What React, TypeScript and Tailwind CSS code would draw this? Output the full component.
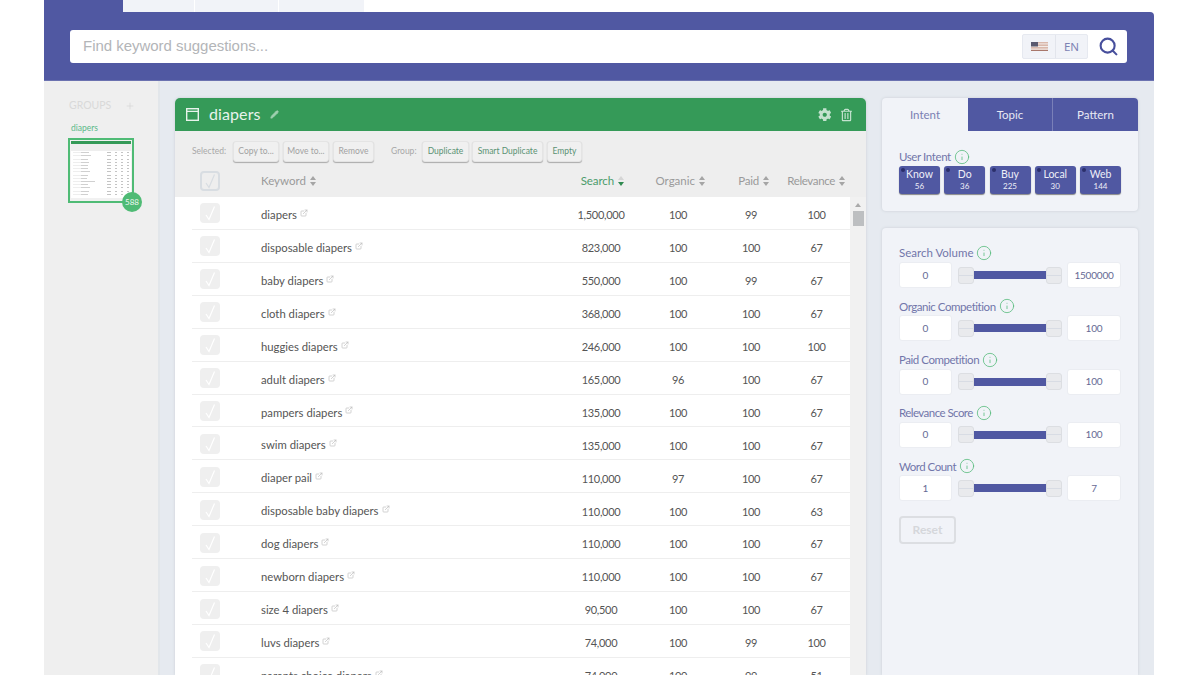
import { Search, Pencil, Plus, ExternalLink, Info } from "lucide-react";
import { FaCog, FaRegTrashAlt } from "react-icons/fa";

const font = "font-['Lato','Noto_Sans',sans-serif]";

const rows: [string, string, string, string, string][] = [
  ["diapers", "1,500,000", "100", "99", "100"],
  ["disposable diapers", "823,000", "100", "100", "67"],
  ["baby diapers", "550,000", "100", "99", "67"],
  ["cloth diapers", "368,000", "100", "100", "67"],
  ["huggies diapers", "246,000", "100", "100", "100"],
  ["adult diapers", "165,000", "96", "100", "67"],
  ["pampers diapers", "135,000", "100", "100", "67"],
  ["swim diapers", "135,000", "100", "100", "67"],
  ["diaper pail", "110,000", "97", "100", "67"],
  ["disposable baby diapers", "110,000", "100", "100", "63"],
  ["dog diapers", "110,000", "100", "100", "67"],
  ["newborn diapers", "110,000", "100", "100", "67"],
  ["size 4 diapers", "90,500", "100", "100", "67"],
  ["luvs diapers", "74,000", "100", "99", "100"],
  ["parents choice diapers", "74,000", "100", "99", "51"],
];

const filters = [
  ["Search Volume", "0", "1500000", "tracking-[0px]"],
  ["Organic Competition", "0", "100", "tracking-[-0.45px]"],
  ["Paid Competition", "0", "100", "tracking-[-0.45px]"],
  ["Relevance Score", "0", "100", "tracking-[-0.55px]"],
  ["Word Count", "1", "7", "tracking-[-0.5px]"],
];

const intents = [
  ["Know", "56"],
  ["Do", "36"],
  ["Buy", "225"],
  ["Local", "30"],
  ["Web", "144"],
];

function Sort({ active }: { active?: boolean }) {
  return (
    <span className="inline-flex flex-col gap-[2px] ml-[4px]">
      <span className={`w-0 h-0 border-x-[3px] border-x-transparent border-b-[4px] ${active ? "border-b-[#d5d5d5]" : "border-b-[#a5a5a5]"}`} />
      <span className={`w-0 h-0 border-x-[3px] border-x-transparent border-t-[4px] ${active ? "border-t-[#2f8a50]" : "border-t-[#a5a5a5]"}`} />
    </span>
  );
}

function Tick({ color }: { color: string }) {
  return (
    <svg width="14" height="16" viewBox="0 0 14 16" fill="none" stroke={color} strokeWidth="1.2">
      <path d="M3 10L6 14.5L11.5 1.5" />
    </svg>
  );
}

function InfoDot() {
  return <Info className="ml-[3px] w-[16px] h-[16px] text-[#57bb7c]" strokeWidth={1.2} />;
}

function Btn({ children, green, w }: { children: string; green?: boolean; w: string }) {
  return (
    <span className={`${w} h-[21px] flex items-center justify-center whitespace-nowrap text-[8.5px] rounded-[3px] border border-[#e4e4e4] bg-[#f0f0f0] shadow-[0_1px_1px_#aaa] ${green ? "text-[#5b9274]" : "text-[#a2a2a2]"}`}>
      {children}
    </span>
  );
}

function Thumb() {
  return (
    <div className="relative mt-[4px] ml-[24px] w-[66px] h-[65px] border-2 border-[#4fbb75] bg-[#f1f1f1] p-[1px]">
      <div className="h-[3px] bg-[#359a58]" />
      <div className="h-[7px] bg-[#eee]" />
      <div className="h-[47px] bg-white px-[2px] pt-[1px] flex flex-col gap-[1.7px]">
        {[8, 10, 7, 8, 7, 7, 9, 7, 6, 14, 7, 9, 8, 7].map((w, i) => (
          <div key={i} className="flex items-center h-[1.5px]">
            <div className="w-[8px] h-px bg-[#eee]" />
            <div className="h-px bg-[#d0d0d0]" style={{ width: w }} />
            <div className="ml-auto flex gap-[4px]">
              <div className="w-[4px] h-px bg-[#c4c4c4]" />
              <div className="w-[2px] h-px bg-[#c4c4c4]" />
              <div className="w-[2px] h-px bg-[#c4c4c4]" />
              <div className="w-[2px] h-px bg-[#c4c4c4]" />
            </div>
          </div>
        ))}
      </div>
      <div className="absolute left-[52px] top-[52px] w-[20px] h-[20px] rounded-full bg-[#4fbb75] text-[#eef7f1] text-[8px] flex items-center justify-center">
        588
      </div>
    </div>
  );
}

export default function App() {
  return (
    <div className={`${font} w-[1200px] h-[675px] overflow-hidden bg-white`}>
      <div className="mx-[44px] w-[1110px] h-full flex flex-col">
        {/* top tabs */}
        <div className="h-[12px] flex shrink-0">
          <div className="w-[79px] bg-[#5058a2]" />
          <div className="w-[72px] bg-[#f1f3f8] border-r border-white" />
          <div className="w-[84px] bg-[#f1f3f8] border-r border-white" />
          <div className="w-[85px] bg-[#f1f3f8]" />
        </div>
        {/* search header */}
        <div className="h-[69px] shrink-0 bg-[#5058a2] rounded-tr-[4px] pl-[26px] pr-[27px] pt-[18px] border-b border-[#6b72b0]">
          <div className="h-[33px] bg-white rounded-[3px] flex items-center pl-[13px] pr-[8px]">
            <span className="text-[15px] tracking-[-0.03px] text-[#b3b5b8] font-['Liberation_Sans',sans-serif]">Find keyword suggestions...</span>
            <div className="ml-auto h-[25px] flex items-stretch rounded-[2px] border border-[#e6e9f0] bg-[#f1f3f8]">
              <div className="w-[33px] flex items-center justify-center border-r border-[#e2e5ec]">
                <svg width="17" height="9" viewBox="0 0 17 9">
                  <rect width="17" height="9" fill="#d9b8ab" />
                  <rect y="1.4" width="17" height="1" fill="#f3ece8" />
                  <rect y="4" width="17" height="1" fill="#f3ece8" />
                  <rect y="6.6" width="17" height="1" fill="#f3ece8" />
                  <rect y="8" width="17" height="1" fill="#a8776b" />
                  <rect width="7" height="4.5" fill="#5a5a70" />
                </svg>
              </div>
              <div className="w-[31px] flex items-center justify-center text-[11.5px] text-[#7d82b4] font-['Noto_Sans',sans-serif]">EN</div>
            </div>
            <Search className="ml-[10px] w-[21px] h-[21px] text-[#474f9c]" strokeWidth={2.4} />
          </div>
        </div>
        {/* body */}
        <div className="flex-1 flex min-h-0 bg-[#e6eaf0]">
          {/* sidebar */}
          <div className="w-[116px] shrink-0 bg-[#efefef] border-r-2 border-[#e2e6ea] pt-[18px]">
            <div className="flex items-center pl-[25px] text-[10.5px] text-[#d9d9d9] h-[14px]">
              <span>GROUPS</span>
              <Plus className="ml-[14px] w-[10px] h-[10px]" strokeWidth={2} />
            </div>
            <div className="ml-[27px] mt-[9px] text-[8.5px] leading-[12px] text-[#5bb98a]">diapers</div>
            <Thumb />
          </div>
          {/* main card */}
          <div className="ml-[15px] mt-[17px] w-[691px] shrink-0 rounded-t-[5px] overflow-hidden bg-[#eeeeee] shadow-[0_0_3px_#c8cdd4] flex flex-col">
            <div className="h-[33px] shrink-0 bg-[#359a58] flex items-center pl-[11px] pr-[14px] text-[#e8f3ec]">
              <svg width="13" height="13" viewBox="0 0 13 13" fill="none" stroke="#e8f3ec" strokeWidth="1.4">
                <rect x="0.7" y="0.7" width="11.6" height="11.6" />
                <path d="M0.7 3.4H12.3" />
              </svg>
              <span className="ml-[10px] -mt-[2px] text-[16px] tracking-[0.1px]">diapers</span>
              <Pencil className="ml-[9px] w-[9px] h-[9px] text-[#9fd0b0] fill-[#9fd0b0]" />
              <FaCog className="ml-auto w-[13.5px] h-[13.5px] text-[#c4e2cf]" />
              <FaRegTrashAlt className="ml-[10px] w-[11px] h-[14px] text-[#c4e2cf]" />
            </div>
            <div className="h-[40px] shrink-0 flex items-center pl-[17px] text-[8.5px] text-[#a8a8a8]">
              <span className="w-[41px]">Selected:</span>
              <Btn w="w-[46px]">Copy to...</Btn>
              <span className="w-[4px]" />
              <Btn w="w-[46px]">Move to...</Btn>
              <span className="w-[4px]" />
              <Btn w="w-[41px]">Remove</Btn>
              <span className="ml-[17px] w-[31px]">Group:</span>
              <Btn green w="w-[47px]">Duplicate</Btn>
              <span className="w-[3px]" />
              <Btn green w="w-[71px]">Smart Duplicate</Btn>
              <span className="w-[4px]" />
              <Btn green w="w-[35px]">Empty</Btn>
            </div>
            <div className="h-[26px] shrink-0 flex items-start pl-[25px] text-[11.5px] text-[#9a9a9a]">
              <div className="w-[20px] h-[20px] rounded-[4px] border-2 border-[#d8dde2] flex items-center justify-center">
                <Tick color="#d8dde2" />
              </div>
              <div className="h-[20px] ml-[41px] w-[285px] flex items-center">Keyword<Sort /></div>
              <div className="h-[20px] w-[78px] flex items-center justify-end text-[#4c9c6c] tracking-[-0.1px]">Search<Sort active /></div>
              <div className="h-[20px] w-[81px] flex items-center justify-end">Organic<Sort /></div>
              <div className="h-[20px] w-[64px] flex items-center justify-end tracking-[-0.2px]">Paid<Sort /></div>
              <div className="h-[20px] w-[76px] flex items-center justify-end tracking-[-0.35px]">Relevance<Sort /></div>
            </div>
            <div className="flex-1 min-h-0 flex bg-white">
              <div className="w-[17px] shrink-0 bg-white" />
              <div className="w-[658px] shrink-0">
                {rows.map((r) => (
                  <div key={r[0]} className="h-[32.93px] flex items-center border-b border-[#eeeeee] text-[11.3px] text-[#555]">
                    <div className="ml-[8px] w-[20px] h-[20px] rounded-[4px] bg-[#efefef] flex items-center justify-center mt-px">
                      <Tick color="#ffffff" />
                    </div>
                    <div className="ml-[41px] w-[270px] flex items-center mt-[5px]">
                      {r[0]}
                      <ExternalLink className="ml-[3px] -mt-[5px] w-[8px] h-[8px] text-[#bbbbbb]" />
                    </div>
                    <div className="ml-[37px] w-[66px] text-center mt-[5px] text-[11px] tracking-[-0.3px]">{r[1]}</div>
                    <div className="ml-[24px] w-[40px] text-center mt-[5px] text-[11px] tracking-[-0.3px]">{r[2]}</div>
                    <div className="ml-[33px] w-[40px] text-center mt-[5px] text-[11px] tracking-[-0.3px]">{r[3]}</div>
                    <div className="ml-[25.5px] w-[40px] text-center mt-[5px] text-[11px] tracking-[-0.3px]">{r[4]}</div>
                  </div>
                ))}
              </div>
              <div className="flex-1 bg-[#f1f1f1] flex flex-col items-center pt-[6px]">
                <span className="w-0 h-0 border-x-[3px] border-x-transparent border-b-[4px] border-b-[#aaa]" />
                <span className="mt-[4px] w-[11px] h-[15px] bg-[#bdbfc1]" />
              </div>
            </div>
          </div>
          {/* right */}
          <div className="ml-[16px] mt-[17px] w-[256px] shrink-0 flex flex-col">
            <div className="h-[113px] shrink-0 rounded-[4px] overflow-hidden bg-[#f1f3f8] shadow-[0_0_3px_#c8cdd4]">
              <div className="h-[33px] flex text-[11.5px]">
                <div className="w-[86px] flex items-center justify-center text-[#7a7fb3]">Intent</div>
                <div className="w-[85px] flex items-center justify-center bg-[#5058a2] text-[#e8e9f4] border-r border-[#7a80b8]">Topic</div>
                <div className="flex-1 flex items-center justify-center bg-[#5058a2] text-[#e8e9f4]">Pattern</div>
              </div>
              <div className="pl-[17px] pt-[18px]">
                <div className="flex items-center text-[11.5px] tracking-[-0.4px] text-[#7176aa] h-[16px]">User Intent<InfoDot /></div>
                <div className="flex gap-[4.25px] mt-px">
                  {intents.map(([a, b]) => (
                    <div key={a} className="relative w-[41px] h-[28px] rounded-[3px] bg-[#5058a2] shadow-[0_1px_1px_#888] flex flex-col items-center text-[#eeeff8] pt-[1px]">
                      <span className="absolute left-[2px] top-[2px] w-[4px] h-[4px] rounded-full bg-[#2b2f6b]" />
                      <span className="text-[10.5px] leading-[14px]">{a}</span>
                      <span className="text-[8px] leading-[10px]">{b}</span>
                    </div>
                  ))}
                </div>
              </div>
            </div>
            <div className="mt-[17px] flex-1 rounded-t-[4px] bg-[#f1f3f8] shadow-[0_0_3px_#c8cdd4] px-[17px] pt-[17px]">
              {filters.map(([name, lo, hi, track]) => (
                <div key={name} className="h-[53.3px]">
                  <div className={`flex items-center text-[11.5px] text-[#7176aa] h-[16px] ${track}`}>{name}<InfoDot /></div>
                  <div className="mt-[1px] flex items-center">
                    <div className="w-[53px] h-[26px] rounded-[3px] bg-white border border-[#ebedf2] flex items-center justify-center text-[10px] text-[#666a94]">{lo}</div>
                    <div className="ml-[6px] w-[104px] h-[17px] flex items-center">
                      <div className="w-[16px] h-[17px] rounded-[3px] bg-[#e9eaed] border border-[#dcdee2] flex items-center"><div className="w-full h-px bg-[#d8dce4]" /></div>
                      <div className="flex-1 h-[8px] bg-[#5058a2]" />
                      <div className="w-[16px] h-[17px] rounded-[3px] bg-[#e9eaed] border border-[#dcdee2] flex items-center"><div className="w-full h-px bg-[#d8dce4]" /></div>
                    </div>
                    <div className="ml-[5px] w-[54px] h-[26px] rounded-[3px] bg-white border border-[#ebedf2] flex items-center justify-center text-[10px] text-[#666a94] tracking-[-0.2px]">{hi}</div>
                  </div>
                </div>
              ))}
              <div className="mt-[4.5px] w-[57px] h-[28px] rounded-[4px] border-2 border-[#dcdee2] flex items-center justify-center text-[12px] font-bold text-[#d5d7db]">Reset</div>
            </div>
          </div>
        </div>
      </div>
    </div>
  );
}
